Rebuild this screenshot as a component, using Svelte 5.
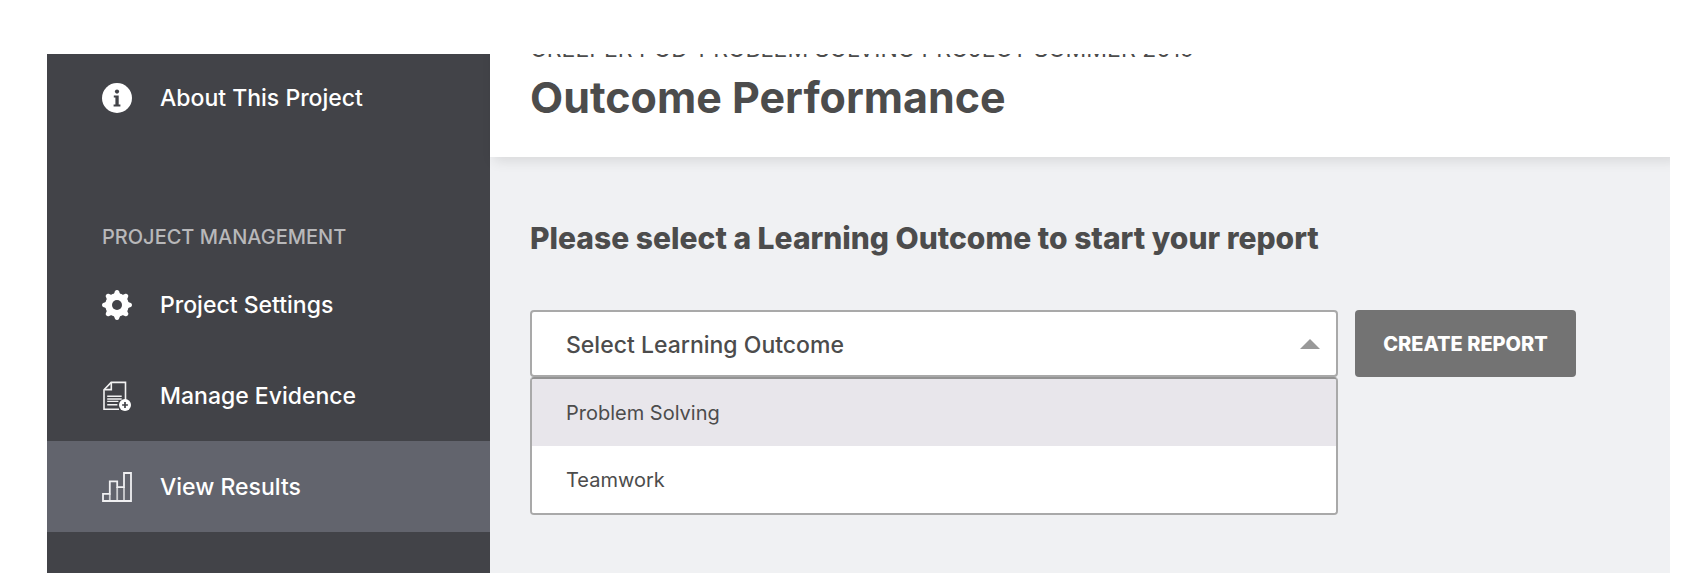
<script>
  let outcomes = ['Problem Solving', 'Teamwork']
  let selected = $state('')
  let highlighted = $state('Problem Solving')
  let open = $state(true)

  function pick(name) {
    selected = name
    open = false
  }

  function toggle(e) {
    e.preventDefault()
    open = !open
  }
</script>

<div class="page">
  <div class="frame">
    <nav class="sidebar" aria-label="Project">
      <a class="nav-item" href="#about">
        <svg class="icon" viewBox="0 0 30 30" aria-hidden="true">
          <circle cx="15" cy="15" r="15" fill="#fff" />
          <circle cx="15" cy="8.6" r="2.1" fill="#424348" />
          <path d="M11.8 12.4h4.9v9h1.7v2.1h-6.8v-2.1h1.8v-6.9h-1.6z" fill="#424348" />
        </svg>
        About This Project
      </a>

      <h2 class="nav-heading">PROJECT MANAGEMENT</h2>

      <a class="nav-item" href="#settings">
        <svg class="icon" viewBox="0 0 30 30" aria-hidden="true">
          <g fill="#fff">
            {#each [0, 45, 90, 135] as angle}
              <path d="M11.9 4 13 1.2Q13.5 0 15 0t2 1.2L18.1 4v22L17 28.8Q16.5 30 15 30t-2-1.2L11.9 26z" transform="rotate({angle} 15 15)" />
            {/each}
            <circle cx="15" cy="15" r="11.8" />
          </g>
          <circle cx="15" cy="15" r="5" fill="#424348" />
        </svg>
        Project Settings
      </a>
      <a class="nav-item" href="#evidence">
        <svg class="icon" viewBox="0 0 30 30" aria-hidden="true">
          <g fill="none" stroke="#f2f2f2" stroke-width="1.6">
            <path d="M17 28.2H2V8.8L9.2 1.4h14.3V19" />
            <path d="M2.4 8.6h6.9V1.8" />
            <path d="M5.2 15.2h14.5M5.2 18h14.5M5.2 20.4h11.2M5.2 23.8h10.2" stroke-width="1.4" />
          </g>
          <circle cx="23" cy="24" r="6" fill="#fff" />
          <path d="M23 21.1v5.8M20.1 24h5.8" stroke="#424348" stroke-width="1.7" />
        </svg>
        Manage Evidence
      </a>
      <a class="nav-item active" href="#results" aria-current="page">
        <svg class="icon" viewBox="0 0 30 30" aria-hidden="true">
          <g fill="none" stroke="#f0f0f2" stroke-width="1.8">
            <path d="M1 29V21.8h6.8V9.4h7.4v5.8H22V1h7v28z" />
            <path d="M7.8 21.5v7.7M15.2 15v14.2M22 15v14.2" stroke-opacity=".75" />
          </g>
        </svg>
        View Results
      </a>
    </nav>

    <main class="content">
      <header class="header">
        <p class="eyebrow">CREEPER POD-PROBLEM SOLVING PROJECT SUMMER 2019</p>
        <h1 class="title">Outcome Performance</h1>
      </header>

      <form class="report" onsubmit={(e) => e.preventDefault()}>
        <label class="prompt" for="outcome">Please select a Learning Outcome to start your report</label>
        <div class="row">
          <div class="field">
            <select id="outcome" class="select" bind:value={selected} onmousedown={toggle}>
              <option value="">Select Learning Outcome</option>
              {#each outcomes as name}
                <option value={name}>{name}</option>
              {/each}
            </select>
            <svg class="arrow" class:closed={!open} viewBox="0 0 20 10" aria-hidden="true">
              <path d="M0 10 10 0l10 10z" fill="#999" />
            </svg>
            {#if open}
              <div class="menu">
                {#each outcomes as name}
                  <button
                    type="button"
                    class="choice"
                    class:highlighted={highlighted === name}
                    onmouseenter={() => (highlighted = name)}
                    onclick={() => pick(name)}
                  >{name}</button>
                {/each}
              </div>
            {/if}
          </div>
          <button class="create" type="submit">CREATE REPORT</button>
        </div>
      </form>
    </main>
  </div>
</div>

<style>
  :global(body) {
    background: #fff;
    font-family: Inter, "Liberation Sans", sans-serif;
    color: #4c4c4c;
  }
  .page {
    box-sizing: border-box;
    min-height: 100vh;
    padding: 54px 34px 13px 47px;
    display: flex;
  }
  .frame {
    flex: 1;
    display: flex;
    overflow: hidden;
  }
  .sidebar {
    width: 443px;
    flex-shrink: 0;
    margin-top: -2px;
    background: #424348;
    display: flex;
    flex-direction: column;
  }
  .nav-item {
    display: flex;
    align-items: center;
    gap: 28px;
    height: 91px;
    padding: 0 55px;
    color: #fff;
    font-size: 23px;
    font-weight: 500;
    text-decoration: none;
  }
  .nav-item.active {
    background: #62646d;
  }
  .icon {
    width: 30px;
    height: 30px;
    flex-shrink: 0;
  }
  .nav-heading {
    margin: 80px 0 8px;
    padding: 0 55px;
    font-size: 20px;
    line-height: 28px;
    font-weight: 500;
    color: #b8b8ba;
  }
  .content {
    flex: 1;
    min-width: 0;
    background: #f0f1f3;
  }
  /* scrolled up under the frame, so the eyebrow is half hidden */
  .header {
    margin: -23px -12px 0 0;
    padding: 0 40px 30px;
    background: #fff;
    box-shadow: 0 8px 12px -4px rgba(0, 0, 0, 0.1);
  }
  .eyebrow {
    margin: 0;
    font-size: 23px;
    line-height: 36px;
    white-space: nowrap;
  }
  .title {
    margin: 0;
    font-size: 43px;
    line-height: 60px;
    font-weight: 700;
  }
  .report {
    padding: 61px 94px 58px 40px;
  }
  .prompt {
    display: block;
    margin-bottom: 52px;
    font-size: 30px;
    line-height: 40px;
    font-weight: 800;
  }
  .row {
    display: flex;
    align-items: flex-start;
    gap: 17px;
  }
  .field {
    flex: 1;
    position: relative;
  }
  .select {
    appearance: none;
    display: block;
    width: 100%;
    height: 67px;
    padding: 2px 64px 0 34px;
    border: 2px solid #a9a9a9;
    border-radius: 4px;
    background: #fff;
    color: #4c4c4c;
    font: 500 23px Inter, sans-serif;
  }
  .arrow {
    position: absolute;
    top: 29px;
    right: 18px;
    width: 20px;
    height: 10px;
    pointer-events: none;
  }
  .arrow.closed {
    transform: rotate(180deg);
  }
  .menu {
    position: absolute;
    top: 100%;
    left: 0;
    right: 0;
    border: 2px solid #a9a9a9;
    border-top-color: #939393;
    border-radius: 4px;
    background: #fff;
    overflow: hidden;
  }
  .choice {
    display: block;
    width: 100%;
    height: 67px;
    padding: 0 34px;
    border: 0;
    background: #fff;
    color: #4c4c4c;
    font: 400 20px Inter, sans-serif;
    text-align: left;
    cursor: pointer;
  }
  .choice.highlighted {
    background: #e8e6eb;
  }
  .create {
    width: 221px;
    height: 67px;
    border: 0;
    border-radius: 4px;
    background: #737373;
    color: #fff;
    font: 800 20px Inter, sans-serif;
    cursor: pointer;
  }
</style>
